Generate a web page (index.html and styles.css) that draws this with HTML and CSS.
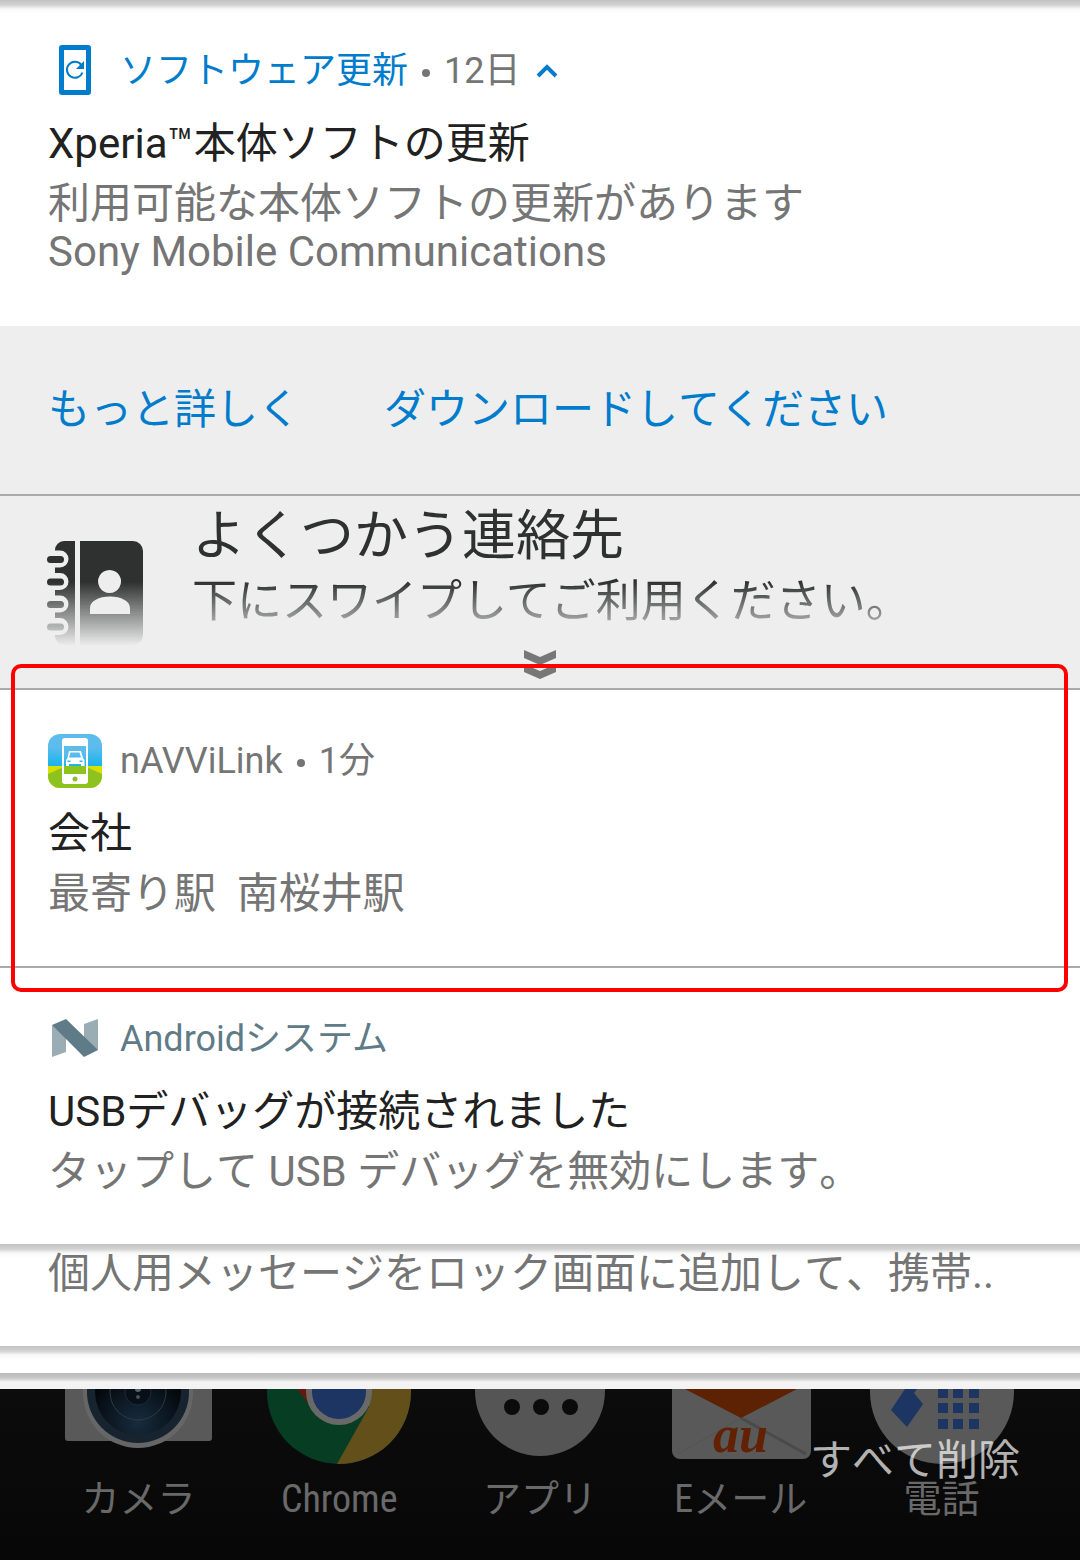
FILE: index.html
```html
<!DOCTYPE html>
<html lang="ja">
<head>
    <meta charset="UTF-8">
    <meta name="viewport" content="width=device-width, initial-scale=1.0">
    <title>通知</title>
    <link rel="stylesheet" href="styles.css">
</head>
<body>

<main class="shade">
    <article class="card card-shadow">
        <header class="card-header update">
            <svg class="app-icon" viewBox="0 0 54 54" aria-hidden="true">
                <path fill="#007ccd" fill-rule="evenodd" d="M14 1h26a3 3 0 0 1 3 3v44a3 3 0 0 1-3 3H14a3 3 0 0 1-3-3V4a3 3 0 0 1 3-3zM16 6v40h22V6z"/>
                <path fill="none" stroke="#007ccd" stroke-width="2" d="M33 20.500A8 8 0 1 0 34.500 28.500"/>
                <path fill="#007ccd" d="M36 17v8h-8z"/>
            </svg>
            <span>ソフトウェア更新</span>
            <span class="dot"></span>
            <time class="age">12日</time>
            <button class="collapse" aria-label="折りたたむ">
                <svg viewBox="0 0 22 14"><path d="M2 12l9-9 9 9" fill="none" stroke="#007ccd" stroke-width="4"/></svg>
            </button>
        </header>
        <h2>Xperia™本体ソフトの更新</h2>
        <p>利用可能な本体ソフトの更新があります</p>
        <p class="sub">Sony Mobile Communications</p>
    </article>

    <div class="actions">
        <button>もっと詳しく</button>
        <button>ダウンロードしてください</button>
    </div>

    <section class="contacts">
        <div class="contacts-body">
            <svg class="book" viewBox="0 0 96 106" aria-hidden="true">
                <g fill="#2f3131">
                    <path d="M16 1h11v104H16a9 9 0 0 1-9-9v-1h5a8 8 0 0 0 0-17H7v-5.500h5a8 8 0 0 0 0-17H7V50h5a8 8 0 0 0 0-17H7v-5.500h5a8 8 0 0 0 0-17H7V10a9 9 0 0 1 9-9z"/>
                    <path fill-rule="evenodd" d="M32 1h53a10 10 0 0 1 10 10v84a10 10 0 0 1-10 10H32zM61.500 30a11.500 11.500 0 1 0 .1 0zM42 74h40v-6c0-7-9-11.500-20-11.500S42 61 42 68z"/>
                    <rect x="-1" y="16" width="17" height="7" rx="3.500"/>
                    <rect x="-1" y="38.500" width="17" height="7" rx="3.500"/>
                    <rect x="-1" y="61" width="17" height="7" rx="3.500"/>
                    <rect x="-1" y="83.500" width="17" height="7" rx="3.500"/>
                </g>
            </svg>
            <div class="contacts-text">
                <h2>よくつかう連絡先</h2>
                <p>下にスワイプしてご利用ください。</p>
            </div>
        </div>
        <svg class="more" viewBox="0 0 32 30" aria-hidden="true">
            <path fill="#777" d="M0 0l16 7 16-7v8l-16 7-16-7zM0 14l16 7 16-7v8l-16 7-16-7z"/>
        </svg>
    </section>

    <article class="card marked">
        <header class="card-header">
            <svg class="app-icon" viewBox="0 0 54 54" aria-hidden="true">
                <defs>
                    <linearGradient id="sky" x1="0" y1="0" x2="0" y2="1">
                        <stop offset="0.4" stop-color="#5cbcec"/>
                        <stop offset="1" stop-color="#12b4ec"/>
                    </linearGradient>
                    <clipPath id="tile"><rect width="54" height="54" rx="12"/></clipPath>
                </defs>
                <g clip-path="url(#tile)">
                    <rect width="54" height="33" fill="url(#sky)"/>
                    <rect y="32" width="54" height="22" fill="#dbe000"/>
                    <path d="M0 40l18-8h18l18 8v14H0z" fill="#8dc21f"/>
                </g>
                <rect x="14" y="4" width="26" height="46" rx="3" fill="#fff"/>
                <rect x="16" y="12" width="22" height="21" fill="url(#sky)"/>
                <rect x="16" y="32" width="22" height="8" fill="#8dc21f"/>
                <circle cx="27" cy="45" r="2.500" fill="#8dc21f"/>
                <path fill="#fff" fill-rule="evenodd" d="M21 17h12l2 7 1.500 2v6H33v-2H21v2h-3v-6l1.500-2zM22.500 18.500L21 23.500h12l-1.500-5z"/>
                <path fill="#3bb5ea" d="M19.500 26.500h3v1.500h-3zM31.500 26.500h3v1.500h-3z"/>
            </svg>
            <span>nAVViLink</span>
            <span class="dot"></span>
            <time class="age">1分</time>
        </header>
        <h2>会社</h2>
        <p>最寄り駅&nbsp; 南桜井駅</p>
    </article>

    <article class="card system-card">
        <header class="card-header system">
            <svg class="app-icon" viewBox="0 0 54 54" aria-hidden="true">
                <path fill="#9badb4" d="M4 13l14 8v19L4 45zM36 12l14-5v31L36 32z"/>
                <path fill="#5f7b87" d="M4 13l14-6 32 31-14 7z"/>
            </svg>
            <span>Androidシステム</span>
        </header>
        <h2>USBデバッグが接続されました</h2>
        <p>タップして USB デバッグを無効にします。</p>
    </article>

    <article class="peek card-shadow">
        <p>個人用メッセージをロック画面に追加して、携帯..</p>
    </article>
    <div class="stacked card-shadow"></div>
    <div class="stacked last"></div>
</main>

<nav class="dock">
    <a href="#camera">
        <svg viewBox="0 0 150 80" aria-hidden="true">
            <defs>
                <radialGradient id="lens" cx="0.5" cy="0.85" r="0.6">
                    <stop offset="0" stop-color="#172c3e"/>
                    <stop offset="1" stop-color="#04070b"/>
                </radialGradient>
            </defs>
            <path d="M2-5h147v54a3 3 0 0 1-3 3H5a3 3 0 0 1-3-3z" fill="#595959"/>
            <circle cx="75" cy="4" r="55" fill="#666"/>
            <circle cx="75" cy="3" r="51" fill="#17232e"/>
            <circle cx="75" cy="3" r="43" fill="url(#lens)"/>
            <circle cx="75" cy="3" r="28" fill="none" stroke="#2b3b43"/>
            <circle cx="75" cy="3" r="13" fill="#080f17" stroke="#1b2b38"/>
            <circle cx="75" cy="0" r="3" fill="#536675"/>
            <circle cx="75" cy="8" r="2" fill="#43525e"/>
        </svg>
        <span>カメラ</span>
    </a>
    <a href="#chrome">
        <svg viewBox="0 0 150 80" aria-hidden="true">
            <circle cx="75" cy="3" r="72" fill="#063d23"/>
            <path d="M73 75l32-57V0h42v3a72 72 0 0 1-74 72z" fill="#634f19"/>
            <path d="M33 0h14v18z" fill="#65180f"/>
            <circle cx="75" cy="3" r="33" fill="#696969"/>
            <circle cx="75" cy="3" r="27" fill="#1c3562"/>
        </svg>
        <span class="latin">Chrome</span>
    </a>
    <a href="#apps">
        <svg viewBox="0 0 150 80" aria-hidden="true">
            <circle cx="75" cy="2" r="65" fill="#555"/>
            <g fill="#0b0b0b">
                <circle cx="47" cy="18" r="8"/>
                <circle cx="76" cy="18" r="8"/>
                <circle cx="105" cy="18" r="8"/>
            </g>
        </svg>
        <span>アプリ</span>
    </a>
    <a href="#mail">
        <svg viewBox="0 0 150 80" aria-hidden="true">
            <path d="M6-5h139v67a8 8 0 0 1-8 8H14a8 8 0 0 1-8-8z" fill="#595959"/>
            <path d="M75 29l65 36" stroke="#4a4a4a" stroke-width="3"/>
            <path d="M75 29L12 65" stroke="#535353"/>
            <path d="M19 0h112L75 29z" fill="#5d2103"/>
            <text class="au" x="47" y="63">au</text>
        </svg>
        <span class="latin">Eメール</span>
    </a>
    <a href="#phone">
        <svg viewBox="0 0 150 80" aria-hidden="true">
            <circle cx="75" cy="3" r="72" fill="#595959"/>
            <g fill="#1c3562">
                <path d="M38 0h12l-3 4 9 11-16 23-16-17z"/>
                <path d="M71 0h10v9H71zM86 0h10v9H86zM102 0h10v9h-10zM71 14h10v10H71zM86 14h10v10H86zM102 14h10v10h-10zM71 30h10v10H71zM86 30h10v10H86zM102 30h10v10h-10z"/>
            </g>
        </svg>
        <span>電話</span>
    </a>
    <button class="clear-all">すべて削除</button>
</nav>

</body>
</html>
```
FILE: styles.css
```css
* {
    box-sizing: border-box;
}

body {
    margin: 0;
    min-height: 100vh;
    display: flex;
    flex-direction: column;
    background-color: #0a0a0a;
    color: #757575;
    font-family: Roboto, "Noto Sans CJK JP", sans-serif;
    font-size: 42px;
}

h2, p {
    margin: 0;
    font-size: 42px;
    font-weight: 400;
    line-height: 60px;
    white-space: nowrap;
}

h2 {
    color: #212121;
}

p, button {
    font-kerning: none;
}

button {
    padding: 0;
    border: none;
    background: none;
    font-family: inherit;
    font-size: inherit;
    cursor: pointer;
}

svg {
    display: block;
}

.shade {
    background-color: #fff;
}

/* Notifications */
.card {
    padding: 44px 48px 42px;
    border-bottom: 2px solid #aaa;
}

.card.card-shadow,
.system-card {
    border-bottom: none;
}

.card-shadow {
    background-image: linear-gradient(#c2c2c2, #d2d2d2 5px, #f8f8f8 9px, #fff 14px);
    background-repeat: no-repeat;
    background-size: 100% 14px;
}

.card-header {
    display: flex;
    align-items: center;
    height: 54px;
    margin-bottom: 16px;
    font-size: 36px;
    line-height: 54px;
}

.app-icon {
    width: 54px;
    height: 54px;
    margin-right: 18px;
}

.update {
    color: #007ccd;
}

.system {
    color: #5f7b87;
}

.age {
    color: #757575;
}

.dot {
    width: 8px;
    height: 8px;
    margin: 4px 14px 0;
    border-radius: 50%;
    background-color: #757575;
}

.collapse {
    width: 22px;
    margin-left: 16px;
}

.sub {
    margin-bottom: 14px;
    line-height: 36px;
}

.actions {
    display: flex;
    align-items: center;
    gap: 84px;
    height: 170px;
    padding: 0 48px;
    background-color: #eee;
    border-bottom: 2px solid #aaa;
}

.actions button {
    color: #007ccd;
    line-height: 60px;
}

/* Contacts shortcut, fades out towards its handle */
.contacts {
    background-color: #eee;
    border-bottom: 2px solid #aaa;
    padding-bottom: 8px;
}

.contacts-body {
    display: flex;
    align-items: flex-end;
    gap: 48px;
    height: 150px;
    padding: 0 48px;
    -webkit-mask-image: linear-gradient(#000 86px, transparent 150px);
    mask-image: linear-gradient(#000 86px, transparent 150px);
}

.book {
    width: 96px;
    height: 106px;
    overflow: visible;
}

.contacts-text {
    height: 150px;
    padding-top: 6px;
}

.contacts-text h2 {
    color: #2f3131;
    font-size: 54px;
    line-height: 70px;
}

.contacts-text p {
    color: #2f3131;
    font-size: 45px;
    font-kerning: auto;
}

.more {
    width: 32px;
    height: 30px;
    margin: 4px auto 0;
}

.marked {
    position: relative;
}

.marked::after {
    content: "";
    position: absolute;
    inset: -26px 12px -26px 11px;
    border: 4px solid #f00;
    border-radius: 10px;
    pointer-events: none;
}

.peek {
    height: 102px;
    padding: 0 48px;
}

.stacked {
    height: 27px;
}

.last {
    height: 16px;
    background-image: linear-gradient(#b9bab9, #c8c8c8 5px, #f3f3f3 9px);
}

/* Launcher dock */
.dock {
    position: relative;
    flex: 1;
    display: flex;
    padding: 0 38px;
    background-image: linear-gradient(#0c0c0c, #070707);
}

.dock a {
    flex: 1;
    display: flex;
    flex-direction: column;
    align-items: center;
    color: #696969;
    font-size: 38px;
    line-height: 60px;
    text-decoration: none;
}

.dock svg {
    width: 150px;
    height: 80px;
}

.latin {
    font-family: "Roboto Condensed", "Liberation Sans Narrow", Roboto, "Noto Sans CJK JP", sans-serif;
}

.au {
    fill: #622103;
    font: italic bold 52px "Liberation Serif", serif;
}

.clear-all {
    position: absolute;
    top: 42px;
    right: 60px;
    color: rgba(255, 255, 255, 0.7);
    line-height: 60px;
}
```
